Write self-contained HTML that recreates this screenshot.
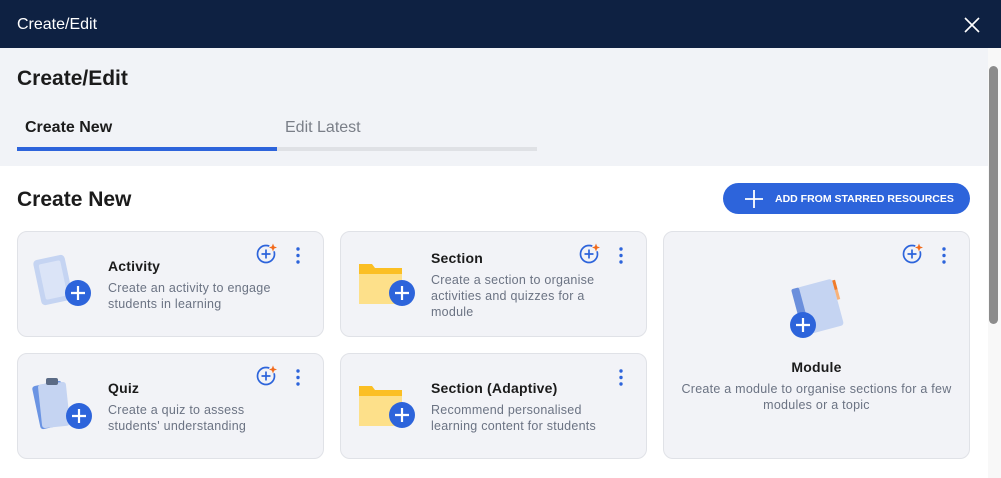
<!DOCTYPE html><html><head><style>
*{box-sizing:border-box;margin:0;padding:0}
body{width:1001px;height:478px;overflow:hidden;font-family:"Liberation Sans","DejaVu Sans",sans-serif;background:#fff;position:relative}
.hdr{position:absolute;left:0;top:0;width:1001px;height:48px;background:#0e2142;color:#fff;font-size:16px;padding:16px 17px}
.top{position:absolute;left:0;top:48px;width:988px;height:118px;background:#f1f3f7}
.sb{position:absolute;left:988px;top:48px;width:13px;height:430px;background:#f8f8f8}
.sb div{position:absolute;left:1px;top:18px;width:9px;height:258px;background:#8c8c8c;border-radius:5px}
.abs{position:absolute}
.card{position:absolute;background:#f2f3f7;border:1px solid #e0e2e7;border-radius:10px}
.t{position:absolute;font-weight:bold;font-size:14px;color:#1b1b1b;letter-spacing:0.2px}
.d{position:absolute;font-size:12.5px;color:#6b7383;line-height:16px;letter-spacing:0.25px}
</style></head><body>
<div class="hdr">Create/Edit</div>
<svg class="abs" style="left:963px;top:16px" width="18" height="18"><path d="M2 2L16 16M16 2L2 16" stroke="#fff" stroke-width="1.6"/></svg>
<div class="top"></div>
<div class="sb"><div></div></div>
<div class="abs" style="left:17px;top:67px;font-size:21px;font-weight:bold;color:#1b1b1b">Create/Edit</div>
<div class="abs" style="left:25px;top:119px;font-size:16px;font-weight:bold;color:#1b1b1b">Create New</div>
<div class="abs" style="left:285px;top:119px;font-size:16px;color:#7a7f88">Edit Latest</div>
<div class="abs" style="left:277px;top:147px;width:260px;height:4px;background:#dfe1e5"></div>
<div class="abs" style="left:17px;top:147px;width:260px;height:4px;background:#2d64db"></div>
<div class="abs" style="left:17px;top:188px;font-size:21px;font-weight:bold;color:#1b1b1b">Create New</div>
<div class="abs" style="left:723px;top:183px;width:247px;height:31px;background:#2d64db;border-radius:16px;color:#fff;font-size:10.5px;font-weight:bold;padding:10px 0 0 52px;letter-spacing:0">ADD FROM STARRED RESOURCES</div>
<svg class="abs" style="left:744px;top:189px" width="20" height="20"><path d="M10 1V19M1 10H19" stroke="#fff" stroke-width="1.8"/></svg>

<div class="card" style="left:17px;top:231px;width:307px;height:106px"></div>
<div class="card" style="left:340px;top:231px;width:307px;height:106px"></div>
<div class="card" style="left:663px;top:231px;width:307px;height:228px"></div>
<div class="card" style="left:17px;top:353px;width:307px;height:106px"></div>
<div class="card" style="left:340px;top:353px;width:307px;height:106px"></div>

<svg width="0" height="0" style="position:absolute"><defs>
<g id="star"><circle cx="10" cy="11" r="8.5" fill="none" stroke="#2d64db" stroke-width="1.7"/><path d="M10 6.5V15.5M5.5 11H14.5" stroke="#2d64db" stroke-width="1.7"/><circle cx="17" cy="4.5" r="4" fill="#f2f3f7"/><path d="M17 0.5L18.1 3.4 21 4.5 18.1 5.6 17 8.5 15.9 5.6 13 4.5 15.9 3.4Z" fill="#f26b1d"/></g>
<g id="dots"><circle cx="2" cy="2" r="1.7" fill="#2d64db"/><circle cx="2" cy="8.5" r="1.7" fill="#2d64db"/><circle cx="2" cy="15" r="1.7" fill="#2d64db"/></g>
<g id="plus"><circle cx="13" cy="13" r="13" fill="#2d64db"/><path d="M13 6V20M6 13H20" stroke="#fff" stroke-width="2.2"/></g>
<g id="folder"><path d="M3 2H16L19 6H46V34H3Z" fill="#fbbf24"/><path d="M3 12H46V42H3Z" fill="#fde08a"/></g>
</defs></svg>

<svg class="abs" style="left:256px;top:243px" width="22" height="22"><use href="#star"/></svg>
<svg class="abs" style="left:579px;top:243px" width="22" height="22"><use href="#star"/></svg>
<svg class="abs" style="left:902px;top:243px" width="22" height="22"><use href="#star"/></svg>
<svg class="abs" style="left:256px;top:365px" width="22" height="22"><use href="#star"/></svg>
<svg class="abs" style="left:296px;top:247px" width="4" height="18"><use href="#dots"/></svg>
<svg class="abs" style="left:619px;top:247px" width="4" height="18"><use href="#dots"/></svg>
<svg class="abs" style="left:942px;top:247px" width="4" height="18"><use href="#dots"/></svg>
<svg class="abs" style="left:296px;top:369px" width="4" height="18"><use href="#dots"/></svg>
<svg class="abs" style="left:619px;top:369px" width="4" height="18"><use href="#dots"/></svg>

<svg class="abs" style="left:32px;top:254px" width="62" height="56"><rect x="5" y="3" width="32" height="46" rx="4" transform="rotate(-12 21 26)" fill="#c5d4f2"/><rect x="10" y="8" width="22" height="36" rx="2" transform="rotate(-12 21 26)" fill="#dbe4f7"/><use href="#plus" x="33" y="26"/></svg>
<div class="t" style="left:108px;top:258px">Activity</div>
<div class="d" style="left:108px;top:280px">Create an activity to engage<br>students in learning</div>

<svg class="abs" style="left:356px;top:262px" width="62" height="48"><use href="#folder"/><use href="#plus" x="33" y="18"/></svg>
<div class="t" style="left:431px;top:250px">Section</div>
<div class="d" style="left:431px;top:272px">Create a section to organise<br>activities and quizzes for a<br>module</div>

<svg class="abs" style="left:356px;top:384px" width="62" height="48"><use href="#folder"/><use href="#plus" x="33" y="18"/></svg>
<div class="t" style="left:431px;top:380px">Section (Adaptive)</div>
<div class="d" style="left:431px;top:402px">Recommend personalised<br>learning content for students</div>

<svg class="abs" style="left:32px;top:375px" width="62" height="62"><rect x="4" y="8" width="30" height="44" rx="3" transform="rotate(-12 19 30)" fill="#6b94e3"/><rect x="8" y="8" width="28" height="44" rx="3" transform="rotate(-6 22 30)" fill="#c5d4f2"/><rect x="14" y="3" width="12" height="7" rx="2" fill="#5b6b86"/><use href="#plus" x="34" y="28"/></svg>
<div class="t" style="left:108px;top:380px">Quiz</div>
<div class="d" style="left:108px;top:402px">Create a quiz to assess<br>students' understanding</div>

<svg class="abs" style="left:788px;top:275px" width="60" height="66"><g transform="rotate(-15 30 30)"><rect x="10" y="8" width="40" height="48" rx="3" fill="#c5d4f2"/><rect x="8" y="8" width="8" height="48" rx="2" fill="#6b8fdc"/><rect x="50" y="10" width="3" height="10" fill="#f07b2a"/><rect x="50" y="20" width="3" height="10" fill="#f7b27a"/></g><use href="#plus" x="2" y="37"/></svg>
<div class="t" style="left:663px;top:359px;width:307px;text-align:center">Module</div>
<div class="d" style="left:663px;top:381px;width:307px;text-align:center">Create a module to organise sections for a few<br>modules or a topic</div>
</body></html>
